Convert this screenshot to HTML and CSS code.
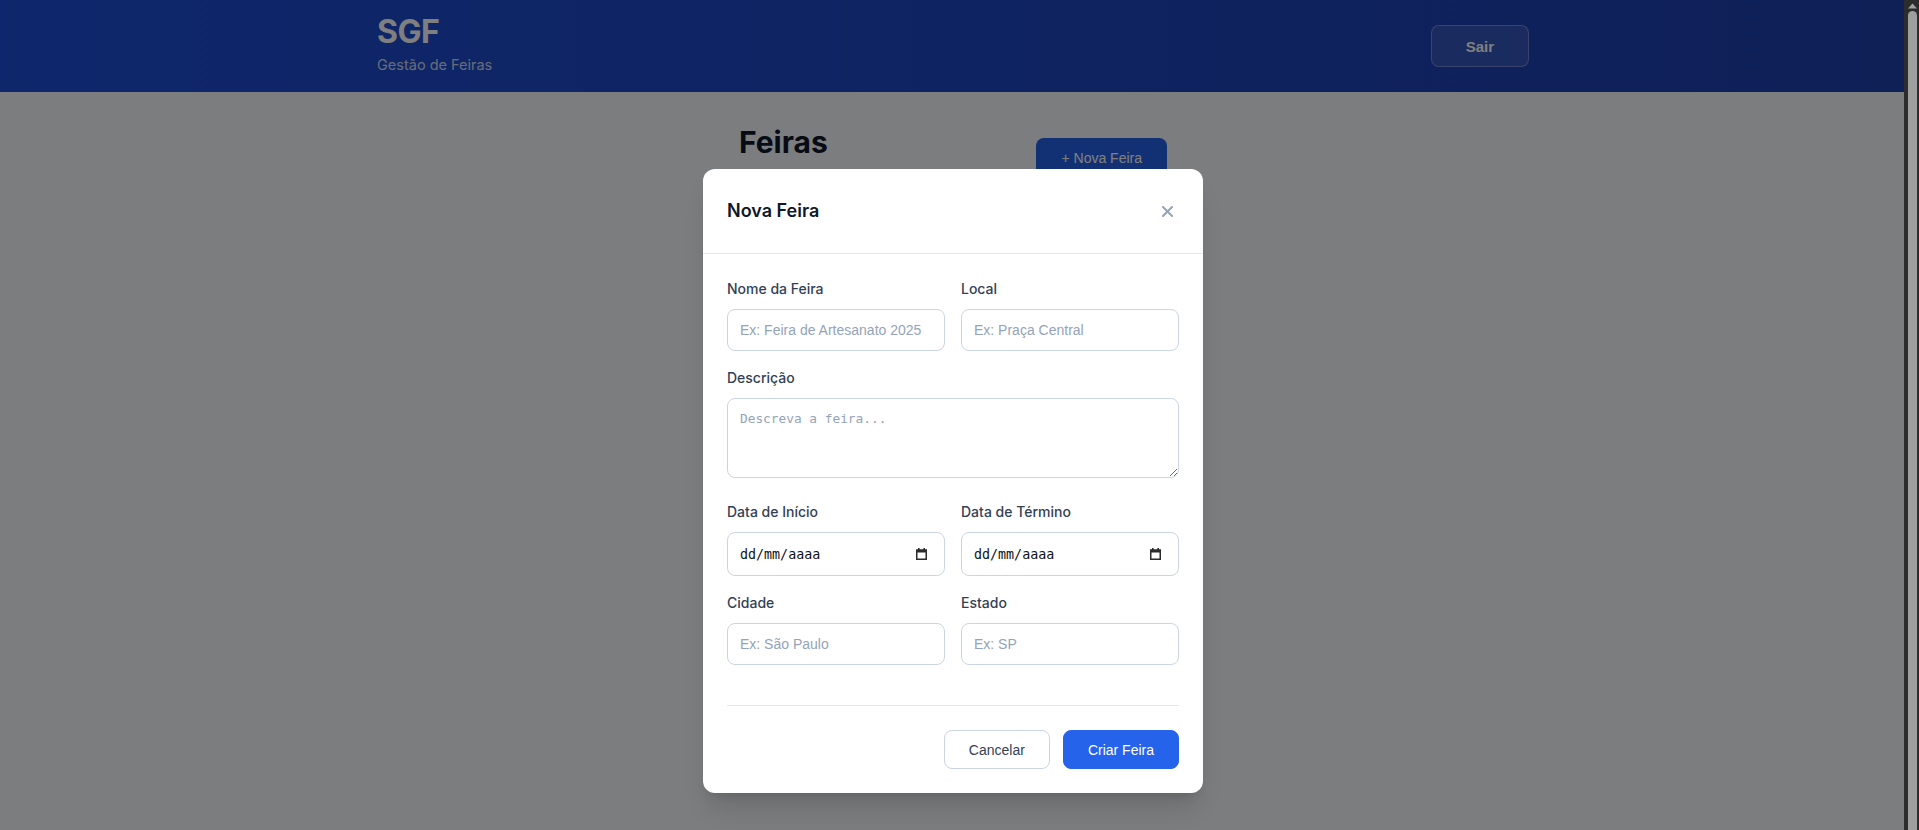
FILE: index.html
```html
<!DOCTYPE html>
<html lang="pt-BR">
<head>
<meta charset="utf-8">
<title>SGF - Gestão de Feiras</title>
<link rel="stylesheet" href="styles.css">
</head>
<body>
<div class="app">
  <header class="topbar">
    <div class="topbar-inner">
      <div class="brand">
        <div class="brand-name">SGF</div>
        <div class="brand-sub">Gestão de Feiras</div>
      </div>
      <button class="btn-logout" type="button">Sair</button>
    </div>
  </header>

  <main class="main">
    <div class="page-head">
      <h1 class="page-title">Feiras</h1>
      <button class="btn-new" type="button">+ Nova Feira</button>
    </div>
  </main>

  <div class="overlay">
    <div class="modal">
      <div class="modal-header">
        <h2 class="modal-title">Nova Feira</h2>
        <button class="modal-close" type="button" aria-label="Fechar">
          <svg width="11" height="11" viewBox="0 0 11 11"><path d="M1 1L10 10M10 1L1 10" stroke="#94a3b8" stroke-width="2" stroke-linecap="round"/></svg>
        </button>
      </div>
      <form class="modal-body">
        <div class="form-row">
          <div class="field">
            <label class="field-label">Nome da Feira</label>
            <input class="text-input" type="text" placeholder="Ex: Feira de Artesanato 2025">
          </div>
          <div class="field">
            <label class="field-label">Local</label>
            <input class="text-input" type="text" placeholder="Ex: Praça Central">
          </div>
        </div>
        <div class="form-row single wide-gap">
          <div class="field">
            <label class="field-label">Descrição</label>
            <textarea class="text-area" placeholder="Descreva a feira..."></textarea>
          </div>
        </div>
        <div class="form-row">
          <div class="field">
            <label class="field-label">Data de Início</label>
            <div class="date-input"><span>dd/mm/aaaa</span>
              <svg width="11" height="12" viewBox="0 0 11 12"><rect x="2" y="0" width="1.6" height="2" fill="#2b2b2b"/><rect x="7.4" y="0" width="1.6" height="2" fill="#2b2b2b"/><rect x="0" y="1.5" width="11" height="3" fill="#2b2b2b"/><rect x="0.75" y="2.25" width="9.5" height="9" fill="none" stroke="#2b2b2b" stroke-width="1.5"/></svg>
            </div>
          </div>
          <div class="field">
            <label class="field-label">Data de Término</label>
            <div class="date-input"><span>dd/mm/aaaa</span>
              <svg width="11" height="12" viewBox="0 0 11 12"><rect x="2" y="0" width="1.6" height="2" fill="#2b2b2b"/><rect x="7.4" y="0" width="1.6" height="2" fill="#2b2b2b"/><rect x="0" y="1.5" width="11" height="3" fill="#2b2b2b"/><rect x="0.75" y="2.25" width="9.5" height="9" fill="none" stroke="#2b2b2b" stroke-width="1.5"/></svg>
            </div>
          </div>
        </div>
        <div class="form-row last">
          <div class="field">
            <label class="field-label">Cidade</label>
            <input class="text-input" type="text" placeholder="Ex: São Paulo">
          </div>
          <div class="field">
            <label class="field-label">Estado</label>
            <input class="text-input" type="text" placeholder="Ex: SP">
          </div>
        </div>
        <div class="modal-footer">
          <button class="btn-cancel" type="button">Cancelar</button>
          <button class="btn-submit" type="button">Criar Feira</button>
        </div>
      </form>
    </div>
  </div>
</div>
<div class="scrollbar" aria-hidden="true">
  <div class="scroll-arrow">
    <svg width="9" height="6" viewBox="0 0 9 6"><path d="M4.5 0.5L9 5.5H0Z" fill="#9f9f9f"/></svg>
  </div>
  <div class="scroll-thumb"></div>
</div>
</body>
</html>
```
FILE: styles.css
```css
html, body {
  height: 100%;
}
body {
  margin: 0;
  display: flex;
  overflow: hidden;
  background: #f8fafc;
  font-family: Inter, "Noto Sans", sans-serif;
  color: #0f172a;
}

.app {
  flex: 1;
  position: relative;
  overflow: hidden;
  background: #f8fafc;
}

.scrollbar {
  width: 15px;
  flex: none;
  background: #2c2c2c;
  display: flex;
  flex-direction: column;
}
.scroll-arrow {
  height: 11px;
  display: flex;
  justify-content: center;
  align-items: flex-end;
  padding-left: 2px;
}
.scroll-arrow svg {
  display: block;
  margin-bottom: 2px;
}
.scroll-thumb {
  flex: 1;
  margin: 0 2px 0 4px;
  background: #9f9f9f;
  border-radius: 5px 5px 0 0;
}

.topbar {
  height: 92px;
  box-sizing: border-box;
  padding-left: 2px;
  background: linear-gradient(90deg, #1d4ed8, #1e40af);
}
.topbar-inner {
  max-width: 1152px;
  height: 100%;
  margin: 0 auto;
  display: flex;
  align-items: center;
  justify-content: space-between;
}
.brand {
  padding-bottom: 4px;
}
.brand-name {
  font-size: 32px;
  line-height: 38px;
  font-weight: 700;
  color: #ffffff;
  letter-spacing: -0.5px;
}
.brand-sub {
  margin-top: 4px;
  font-size: 14.5px;
  line-height: 20px;
  color: rgba(255, 255, 255, 0.8);
}
.btn-logout {
  height: 42px;
  padding: 0 34px;
  background: rgba(255, 255, 255, 0.1);
  border: 1px solid rgba(255, 255, 255, 0.3);
  border-radius: 8px;
  color: #ffffff;
  font-family: "Liberation Sans", Arial, sans-serif;
  font-size: 15px;
  font-weight: 700;
}

.main {
  padding-top: 32px;
  padding-left: 2px;
}
.page-head {
  width: 428px;
  margin: 0 auto;
  display: flex;
  justify-content: space-between;
  align-items: flex-start;
}
.page-title {
  margin: 0;
  font-size: 30px;
  line-height: 36px;
  font-weight: 700;
  color: #0f172a;
}
.btn-new {
  margin-top: 14px;
  height: 40px;
  padding: 0 25px;
  background: #2563eb;
  border: none;
  border-radius: 8px;
  color: #ffffff;
  font-family: "Liberation Sans", Arial, sans-serif;
  font-size: 14px;
}

.overlay {
  position: absolute;
  inset: 0;
  background: rgba(0, 0, 0, 0.5);
  display: flex;
  justify-content: center;
  align-items: flex-start;
  padding-top: 169px;
  padding-left: 2px;
}
.modal {
  width: 500px;
  background: #ffffff;
  border-radius: 12px;
  box-shadow: 0 20px 25px -5px rgba(0, 0, 0, 0.12), 0 8px 10px -6px rgba(0, 0, 0, 0.1);
}
.modal-header {
  height: 85px;
  box-sizing: border-box;
  padding: 0 24px;
  border-bottom: 1px solid #e2e8f0;
  display: flex;
  align-items: center;
  justify-content: space-between;
}
.modal-title {
  margin: 0;
  font-size: 18px;
  line-height: 28px;
  font-weight: 600;
  color: #0f172a;
}
.modal-close {
  width: 24px;
  height: 24px;
  padding: 0;
  border: none;
  background: transparent;
  display: flex;
  align-items: center;
  justify-content: center;
}

.modal-body {
  padding: 25px 24px 24px;
}
.form-row {
  display: grid;
  grid-template-columns: 1fr 1fr;
  column-gap: 16px;
  margin-bottom: 17px;
}
.form-row.single {
  grid-template-columns: 1fr;
}
.form-row.wide-gap {
  margin-bottom: 24px;
}
.form-row.last {
  margin-bottom: 0;
}
.field-label {
  display: block;
  margin-bottom: 10px;
  font-size: 14px;
  line-height: 20px;
  font-weight: 500;
  color: #334155;
}
.text-input {
  display: block;
  width: 100%;
  height: 42px;
  box-sizing: border-box;
  margin: 0;
  padding: 0 12px;
  border: 1px solid #cbd5e1;
  border-radius: 8px;
  background: #ffffff;
  font-family: "Liberation Sans", Arial, sans-serif;
  font-size: 14px;
  color: #0f172a;
  outline: none;
}
.text-input::placeholder,
.text-area::placeholder {
  color: #94a3b8;
  opacity: 1;
}
.text-area {
  display: block;
  width: 100%;
  height: 80px;
  box-sizing: border-box;
  margin: 0;
  padding: 12px;
  border: 1px solid #cbd5e1;
  border-radius: 8px;
  background: #ffffff;
  font-family: "DejaVu Sans Mono", monospace;
  font-size: 12.8px;
  color: #0f172a;
  resize: vertical;
  outline: none;
}
.date-input {
  height: 44px;
  box-sizing: border-box;
  padding: 0 17px 0 12px;
  border: 1px solid #cbd5e1;
  border-radius: 8px;
  background: #ffffff;
  display: flex;
  align-items: center;
  justify-content: space-between;
  font-family: "DejaVu Sans Mono", monospace;
  font-size: 13.333px;
  color: #111111;
}

.modal-footer {
  margin-top: 40px;
  padding-top: 24px;
  border-top: 1px solid #e2e8f0;
  display: flex;
  justify-content: flex-end;
  gap: 13px;
}
.btn-cancel,
.btn-submit {
  height: 39px;
  padding: 0 24px;
  border-radius: 8px;
  font-family: "Liberation Sans", Arial, sans-serif;
  font-size: 14px;
}
.btn-cancel {
  background: #ffffff;
  border: 1px solid #cbd5e1;
  color: #334155;
}
.btn-submit {
  background: #2563eb;
  border: 1px solid #2563eb;
  color: #ffffff;
}
```
